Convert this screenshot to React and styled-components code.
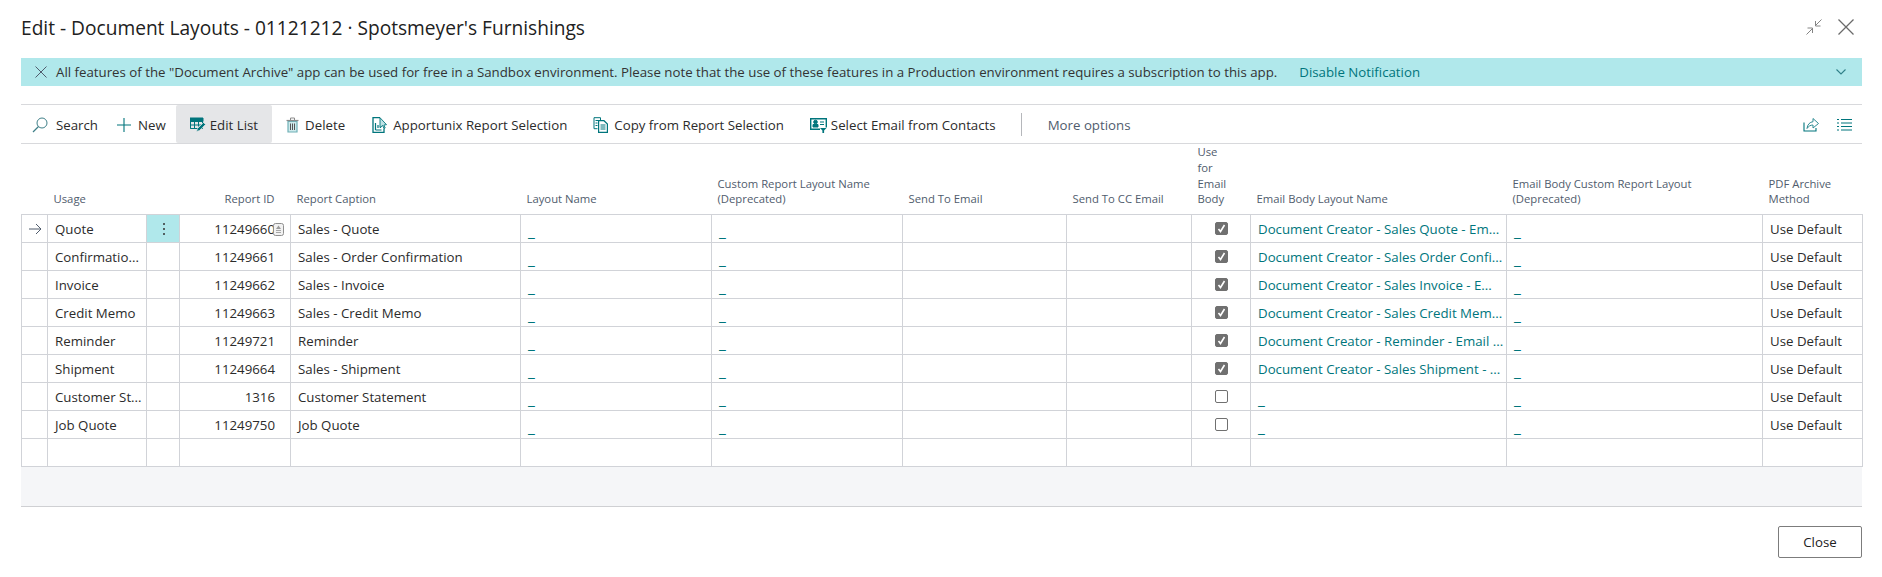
import styled, { createGlobalStyle } from "styled-components";

const TEAL = "#00757c";

const GlobalStyle = createGlobalStyle`
  html, body {
    margin: 0;
    background: #fff;
    font-family: "Open Sans", "Noto Sans", sans-serif;
    color: #2b2b2b;
  }
`;

const Page = styled.div`
  width: 1841px;
  height: 577px;
  margin-left: 21px;
`;

const TitleBar = styled.div`
  height: 58px;
  display: flex;
  align-items: center;
  justify-content: space-between;
`;

const Title = styled.h1`
  margin: 0 0 2px;
  font-size: 19.15px;
  font-weight: 400;
  color: #212121;
`;

const WindowButtons = styled.div`
  display: flex;
  align-items: center;
  gap: 16px;
  margin: 0 8px 4px 0;
`;

const Banner = styled.div`
  height: 28px;
  display: flex;
  align-items: center;
  background: #b0e8eb;
  padding: 0 16px 0 14px;
  font-size: 13.27px;
  color: #333;
`;

const BannerText = styled.span`
  margin-left: 9px;
`;

const BannerLink = styled.a`
  margin-left: 22px;
  color: ${TEAL};
`;

const BannerChevron = styled.span`
  margin-left: auto;
  display: flex;
`;

const Toolbar = styled.div`
  margin-top: 18px;
  height: 38px;
  display: flex;
  align-items: stretch;
  padding-left: 2px;
  border-top: 1px solid #d8d9dc;
  border-bottom: 1px solid #d8d9dc;
  font-size: 13.27px;
`;

const ToolButton = styled.div`
  display: flex;
  align-items: center;
  gap: ${(p) => p.$gap || 5}px;
  margin-left: ${(p) => p.$ml || 0}px;
  padding: 1px ${(p) => p.$pad || 13}px 0;
  border-radius: 2px;
  background: ${(p) => (p.$active ? "#e5e6e8" : "transparent")};
  white-space: nowrap;
`;

const Divider = styled.div`
  width: 1px;
  height: 23px;
  align-self: center;
  margin: 0 12px;
  background: #b5b7bb;
`;

const MoreOptions = styled.div`
  display: flex;
  align-items: center;
  padding: 1px 14px 0;
  color: #505c6d;
`;

const ToolbarEnd = styled.div`
  margin-left: auto;
  display: flex;
  align-items: center;
  gap: 18px;
  padding-right: 10px;
`;

const Grid = styled.table`
  width: 1841px;
  table-layout: fixed;
  border-collapse: collapse;
`;

const HeadCell = styled.th`
  height: 70px;
  padding: 0 4px 7px 6px;
  padding-right: ${(p) => (p.$right ? 16 : 4)}px;
  box-sizing: border-box;
  vertical-align: bottom;
  text-align: ${(p) => (p.$right ? "right" : "left")};
  font-size: 11.3px;
  font-weight: 400;
  line-height: 15.75px;
  color: #505c6d;
  border-bottom: 1px solid #d1d3d8;
`;

const Row = styled.tr`
  height: 28px;
`;

const Cell = styled.td`
  box-sizing: border-box;
  height: 28px;
  padding: 0 6px 0 7px;
  border: 1px solid #d1d3d8;
  font-size: 13.27px;
  white-space: nowrap;
  overflow: hidden;
  position: relative;
  text-align: ${(p) => (p.$right ? "right" : "left")};
  background: ${(p) => (p.$active ? "#b0e8eb" : "transparent")};
`;

const NumberText = styled.span`
  display: block;
  padding-right: 9px;
`;

const LookupIcon = styled.span`
  position: absolute;
  top: 8px;
  right: 6px;
  display: flex;
`;

const Blank = styled.a`
  position: relative;
  top: 2px;
  font-size: 15.5px;
  color: ${TEAL};
`;

const LinkText = styled.a`
  color: ${TEAL};
`;

const CheckWrap = styled.div`
  display: flex;
  justify-content: center;
`;

const CheckBox = styled.span`
  width: 13px;
  height: 13px;
  box-sizing: border-box;
  border-radius: 2px;
  display: flex;
  align-items: center;
  justify-content: center;
  background: ${(p) => (p.$checked ? "#707070" : "#fff")};
  border: 1px solid #707070;
`;

const Centered = styled.div`
  display: flex;
  justify-content: center;
`;

const Tray = styled.div`
  height: 39px;
  background: #f5f6f8;
  border-bottom: 1px solid #cfd0d3;
`;

const Footer = styled.div`
  display: flex;
  justify-content: flex-end;
  margin-top: 19px;
`;

const CloseButton = styled.button`
  width: 84px;
  height: 32px;
  border: 1px solid #7c7c7c;
  border-radius: 2px;
  background: #fff;
  font-family: inherit;
  font-size: 13.27px;
  color: #212121;
`;

const Icon = ({ w = 16, h = 16, children, color = TEAL }) => (
  <svg
    width={w}
    height={h}
    viewBox={`0 0 ${w} ${h}`}
    fill="none"
    stroke={color}
    strokeWidth="1"
    style={{ display: "block", flex: "none" }}
  >
    {children}
  </svg>
);

const SearchIcon = () => (
  <Icon>
    <circle cx="10" cy="6" r="5" stroke="#3f7f88" />
    <path d="M6.500 9.500 1 15" stroke="#3f7f88" strokeWidth="1.200" />
  </Icon>
);

const PlusIcon = () => (
  <Icon>
    <path d="M8 1v14M1 8h14" strokeWidth="1.100" />
  </Icon>
);

const EditListIcon = () => (
  <Icon>
    <path d="M.5 1.500h12v10H.5z" />
    <path d="M0 1h13v3.500H0z" fill={TEAL} />
    <path d="M4.500 4.500v7M8.500 4.500v5M.5 8h11M.5 11.500h5" />
    <path d="M6.500 14.500l1-3 6-6 2 2-6 6z" fill={TEAL} stroke="#e5e6e8" strokeWidth=".7" />
  </Icon>
);

const TrashIcon = () => (
  <Icon w={13}>
    <path d="M2 4.500h9v10.500H2z" stroke="#6fb0b6" fill="#cfeaec" strokeWidth="1.200" />
    <path d="M.5 3.500h12" stroke="#8a8a8a" strokeWidth="1.200" />
    <path d="M4.500 3V1h4v2" stroke="#8a8a8a" />
    <path d="M4.500 6.500v6.500M6.500 6.500v6.500M8.500 6.500v6.500" stroke="#555" />
  </Icon>
);

const ReportIcon = () => (
  <Icon>
    <path d="M8 .7H1v14.600h11v-3.800" strokeWidth="1.300" />
    <path d="M3.500 6v7M3.500 13h6M6 8v3M8.500 9v2" strokeWidth="1.200" />
    <path d="M8 .7l6.500 7-2.600.3 1.300 3-1.200.5-1.300-3L8 10.500z" fill="#bfe3e6" strokeWidth=".9" />
  </Icon>
);

const CopyIcon = () => (
  <Icon>
    <path d="M7.500 3V.7H1v11h3.500M2.500 3.500h3M2.500 6h2M2.500 8.500h2" />
    <path d="M5.600 3.700h5.400l3.400 3.300v8.300H5.600z" strokeWidth="1.200" />
    <path d="M7.500 8h5M7.500 10h5M7.500 12h5" />
  </Icon>
);

const ContactIcon = () => (
  <Icon w={17}>
    <path d="M10 12.300H.7V1.700h15.600v8.800" strokeWidth="1.400" />
    <path d="M3 10V7.500h5V10z" fill={TEAL} />
    <circle cx="5.500" cy="5" r="1.800" fill={TEAL} />
    <path d="M10 5h4M10 7.500h4" strokeWidth="1.200" />
    <path d="M10 11h6.500l-2.400 2.400V16h-1.700v-2.600z" fill={TEAL} stroke="none" />
  </Icon>
);

const ShareIcon = () => (
  <Icon>
    <path d="M1 6.500V15h12v-3" strokeWidth="1.100" />
    <path d="M4 12.500c.3-4 3-6.500 6-6.800V2.500l5.500 5-5.500 4.500V9c-2.500 0-4.500 1.200-6 3.500z" stroke="#2f8c94" />
  </Icon>
);

const ListIcon = () => (
  <Icon w={15}>
    <path d="M0 3.500h2M4 3.500h11M0 7h2M4 7h11M0 10.500h2M4 10.500h11M0 14h2M4 14h11" />
  </Icon>
);

const CollapseIcon = () => (
  <Icon color="#858585">
    <path d="M15.500.5 9 7M9.500 2v5h5M.5 15.500 7 9M6.500 14V9h-5" strokeWidth="1" />
  </Icon>
);

const CloseIcon = ({ size = 16, color = "#6a6a6a", weight = 1.300 }) => (
  <Icon w={size} h={size} color={color}>
    <path d={`M.5 .5L${size - 0.5} ${size - 0.5}M${size - 0.5} .5L.5 ${size - 0.5}`} strokeWidth={weight} />
  </Icon>
);

const ChevronIcon = () => (
  <Icon w={10} h={6} color="#2f7f88">
    <path d="M.5.5 5 5 9.500.5" strokeWidth="1.100" />
  </Icon>
);

const ArrowIcon = () => (
  <Icon w={13} h={12} color="#505c6d">
    <path d="M0 6h12M7 1l5 5-5 5" />
  </Icon>
);

const CheckMark = () => (
  <svg width="9" height="9" viewBox="0 0 9 9" fill="none" stroke="#fff" strokeWidth="1.600" style={{ display: "block" }}>
    <path d="M1.500 5l2 2.500L7.500 1" />
  </svg>
);

const KebabIcon = () => (
  <svg width="4" height="14" viewBox="0 0 4 14" fill="#333" style={{ display: "block" }}>
    <circle cx="2" cy="2" r="1" />
    <circle cx="2" cy="7" r="1" />
    <circle cx="2" cy="12" r="1" />
  </svg>
);

const LookupGlyph = () => (
  <svg width="11" height="13" viewBox="0 0 11 13" style={{ display: "block" }}>
    <rect x=".5" y=".5" width="10" height="12" rx="2" fill="#f2f2f2" stroke="#8f8f8f" />
    <path d="M5.500 2.500 8 6H3z" fill="#9a9a9a" />
    <path d="M3 7.500h5M3 9.500h5" stroke="#a8a8a8" />
  </svg>
);

const columns = [26, 99, 33, 111, 230, 191, 191, 164, 125, 59, 256, 256, 100];

const rows = [
  ["Quote", "11249660", "Sales - Quote", true, "Document Creator - Sales Quote - Em..."],
  ["Confirmatio...", "11249661", "Sales - Order Confirmation", true, "Document Creator - Sales Order Confi..."],
  ["Invoice", "11249662", "Sales - Invoice", true, "Document Creator - Sales Invoice - E..."],
  ["Credit Memo", "11249663", "Sales - Credit Memo", true, "Document Creator - Sales Credit Mem..."],
  ["Reminder", "11249721", "Reminder", true, "Document Creator - Reminder - Email ..."],
  ["Shipment", "11249664", "Sales - Shipment", true, "Document Creator - Sales Shipment - ..."],
  ["Customer St...", "1316", "Customer Statement", false, null],
  ["Job Quote", "11249750", "Job Quote", false, null],
];

const App = () => {
  return (
    <Page>
      <GlobalStyle />
      <TitleBar>
        <Title>Edit - Document Layouts - 01121212 · Spotsmeyer's Furnishings</Title>
        <WindowButtons>
          <CollapseIcon />
          <CloseIcon />
        </WindowButtons>
      </TitleBar>

      <Banner>
        <CloseIcon size={12} color="#505c6d" weight={1} />
        <BannerText>
          All features of the "Document Archive" app can be used for free in a Sandbox environment. Please note that the
          use of these features in a Production environment requires a subscription to this app.
        </BannerText>
        <BannerLink>Disable Notification</BannerLink>
        <BannerChevron>
          <ChevronIcon />
        </BannerChevron>
      </Banner>

      <Toolbar>
        <ToolButton $pad={9} $gap={8}>
          <SearchIcon />
          Search
        </ToolButton>
        <ToolButton $pad={9} $gap={6}>
          <PlusIcon />
          New
        </ToolButton>
        <ToolButton $active $ml={1} $pad={14} $gap={4}>
          <EditListIcon />
          Edit List
        </ToolButton>
        <ToolButton $pad={14} $gap={6}>
          <TrashIcon />
          Delete
        </ToolButton>
        <ToolButton>
          <ReportIcon />
          Apportunix Report Selection
        </ToolButton>
        <ToolButton>
          <CopyIcon />
          Copy from Report Selection
        </ToolButton>
        <ToolButton $gap={4}>
          <ContactIcon />
          Select Email from Contacts
        </ToolButton>
        <Divider />
        <MoreOptions>More options</MoreOptions>
        <ToolbarEnd>
          <ShareIcon />
          <ListIcon />
        </ToolbarEnd>
      </Toolbar>

      <Grid>
        <colgroup>
          {columns.map((w, i) => (
            <col key={i} style={{ width: w }} />
          ))}
        </colgroup>
        <thead>
          <tr>
            <HeadCell />
            <HeadCell>Usage</HeadCell>
            <HeadCell />
            <HeadCell $right>Report ID</HeadCell>
            <HeadCell>Report Caption</HeadCell>
            <HeadCell>Layout Name</HeadCell>
            <HeadCell>
              Custom Report Layout Name
              <br />
              (Deprecated)
            </HeadCell>
            <HeadCell>Send To Email</HeadCell>
            <HeadCell>Send To CC Email</HeadCell>
            <HeadCell>
              Use
              <br />
              for
              <br />
              Email
              <br />
              Body
            </HeadCell>
            <HeadCell>Email Body Layout Name</HeadCell>
            <HeadCell>
              Email Body Custom Report Layout
              <br />
              (Deprecated)
            </HeadCell>
            <HeadCell>
              PDF Archive
              <br />
              Method
            </HeadCell>
          </tr>
        </thead>
        <tbody>
          {rows.map((r, i) => (
            <Row key={r[1]}>
              <Cell>
                {i === 0 && (
                  <Centered>
                    <ArrowIcon />
                  </Centered>
                )}
              </Cell>
              <Cell>{r[0]}</Cell>
              <Cell $active={i === 0}>
                {i === 0 && (
                  <Centered>
                    <KebabIcon />
                  </Centered>
                )}
              </Cell>
              <Cell $right>
                <NumberText>{r[1]}</NumberText>
                {i === 0 && (
                  <LookupIcon>
                    <LookupGlyph />
                  </LookupIcon>
                )}
              </Cell>
              <Cell>{r[2]}</Cell>
              <Cell>
                <Blank>_</Blank>
              </Cell>
              <Cell>
                <Blank>_</Blank>
              </Cell>
              <Cell />
              <Cell />
              <Cell>
                <CheckWrap>
                  <CheckBox $checked={r[3]}>{r[3] && <CheckMark />}</CheckBox>
                </CheckWrap>
              </Cell>
              <Cell>{r[4] ? <LinkText>{r[4]}</LinkText> : <Blank>_</Blank>}</Cell>
              <Cell>
                <Blank>_</Blank>
              </Cell>
              <Cell>Use Default</Cell>
            </Row>
          ))}
          <Row>
            {columns.map((w, i) => (
              <Cell key={i} />
            ))}
          </Row>
        </tbody>
      </Grid>
      <Tray />
      <Footer>
        <CloseButton>Close</CloseButton>
      </Footer>
    </Page>
  );
};

export default App;
